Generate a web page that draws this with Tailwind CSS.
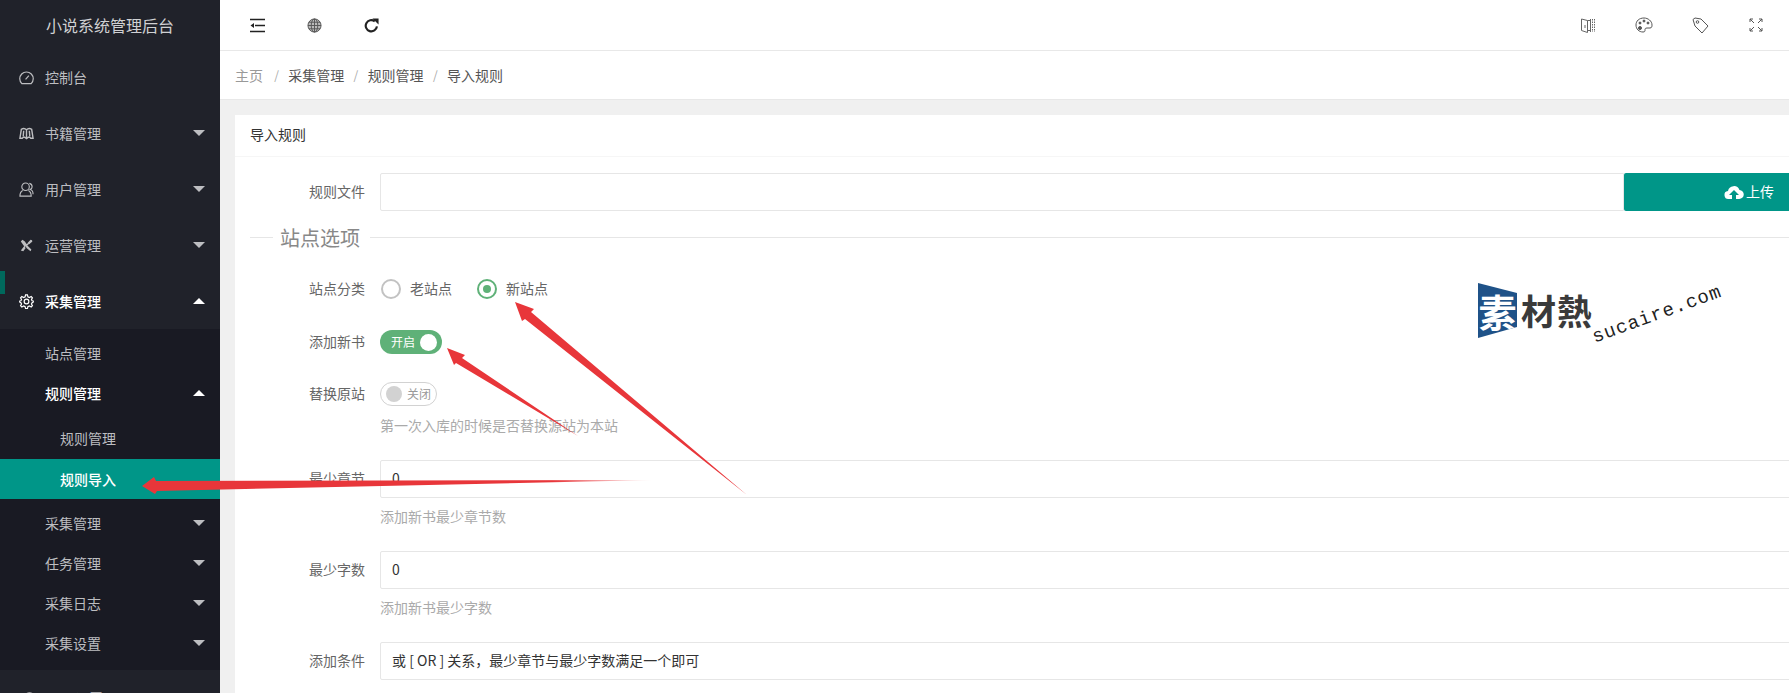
<!DOCTYPE html>
<html lang="zh-CN">
<head>
  <meta charset="UTF-8" />
  <title>小说系统管理后台</title>
  <script src="https://cdn.jsdelivr.net/npm/@tailwindcss/browser@4"></script>
</head>
<body class="relative h-[693px] overflow-hidden bg-white text-[14px] text-[#666] font-['Noto_Sans_CJK_SC','Liberation_Sans',sans-serif]">
<div class="flex h-[693px] overflow-hidden">

  <!-- sidebar -->
  <aside class="relative w-[220px] shrink-0 bg-[#20222a] text-[#bdbec1]">
    <div class="absolute left-0 top-[271px] h-[23px] w-[5px] bg-[#00695c]"></div>
    <div class="flex h-[49px] items-center pl-[46px] text-[16px] text-[#d0d1d3]">小说系统管理后台</div>
    <a class="flex h-[56px] items-center pl-[19px]">
      <svg class="mr-[11px] h-[15px] w-[15px]" viewBox="0 0 16 16" fill="none" stroke="currentColor" stroke-width="1.300"><path d="M3 14.500h10a7.200 7.200 0 1 0-10 0z"/><path d="M7 10l3.500-4"/></svg>
      控制台
    </a>
    <a class="flex h-[56px] items-center pl-[19px] pr-[15px]">
      <svg class="mr-[11px] h-[15px] w-[15px]" viewBox="0 0 16 16" fill="none" stroke="currentColor" stroke-width="1.500"><path d="M8 4C6.500 2.500 4 2.500 2.500 3.500L1 13h2.500l1-1H6l2 1.500L10 12h1.500l1 1H15L13.500 3.500C12 2.500 9.500 2.500 8 4zM8 4v9M5 5l-.5 6M11 5l.5 6"/></svg>
      <span class="flex-1">书籍管理</span>
      <span class="h-0 w-0 border-x-[6px] border-t-[6px] border-x-transparent border-t-[#bdbec1]"></span>
    </a>
    <a class="flex h-[56px] items-center pl-[19px] pr-[15px]">
      <svg class="mr-[11px] h-[15px] w-[15px]" viewBox="0 0 16 16" fill="none" stroke="currentColor" stroke-width="1.200"><circle cx="7" cy="5" r="4"/><path d="M4 9c-2 1-3 3-3 6h12c0-3-1-5-3-6M11 1.500c2 .5 3 2 3 3.500s-1 2.500-2 3c2 .5 3 3 3 5"/></svg>
      <span class="flex-1">用户管理</span>
      <span class="h-0 w-0 border-x-[6px] border-t-[6px] border-x-transparent border-t-[#bdbec1]"></span>
    </a>
    <a class="flex h-[56px] items-center pl-[20px] pr-[15px]">
      <svg class="mr-[12px] h-[13px] w-[13px]" viewBox="0 0 16 16" fill="currentColor"><path d="M1 3l2-2 3 2 2 3 2-1 1 1-2 2 1 1 4 4-1 2-5-4-1-2-1 1zM13 1c1.500 0 2.500 1 2 2.500L13 5l-1.500 1.500-2-2L11 3zM5 9l2 2-3 4-3-1z"/></svg>
      <span class="flex-1">运营管理</span>
      <span class="h-0 w-0 border-x-[6px] border-t-[6px] border-x-transparent border-t-[#bdbec1]"></span>
    </a>
    <a class="flex h-[56px] items-center pl-[19px] pr-[15px] font-medium text-white">
      <svg class="mr-[11px] h-[15px] w-[15px]" viewBox="0 0 16 16" fill="none" stroke="currentColor" stroke-width="1.300"><circle cx="8" cy="8" r="2.500"/><path d="M7 1h2l.5 2 1.500.7L13 2.700l1.300 1.300-1 1.800.7 1.500L16 8l-2 1.200-.7 1.500 1 1.800-1.300 1.300-2-1-1.500.7L9 15.500H7l-.5-2-1.500-.7-2 1L1.700 12.500l1-1.800L2 9.200 0 8l2-.7.700-1.500-1-1.800L3 2.700l2 1 1.500-.7z"/></svg>
      <span class="flex-1">采集管理</span>
      <span class="h-0 w-0 border-x-[6px] border-b-[6px] border-x-transparent border-b-white"></span>
    </a>
    <div class="bg-[#191a23] pb-[7px] pt-[4px]">
      <a class="flex h-[40px] items-center pl-[45px]">站点管理</a>
      <a class="flex h-[40px] items-center pl-[45px] pr-[15px] font-medium text-white">
        <span class="flex-1">规则管理</span>
        <span class="h-0 w-0 border-x-[6px] border-b-[6px] border-x-transparent border-b-white"></span>
      </a>
      <div class="pb-[4px] pt-[5px]">
        <a class="flex h-[41px] items-center pl-[60px]">规则管理</a>
        <a class="flex h-[40px] items-center bg-[#009688] pl-[60px] font-medium text-white">规则导入</a>
      </div>
      <a class="flex h-[40px] items-center pl-[45px] pr-[15px]">
        <span class="flex-1">采集管理</span>
        <span class="h-0 w-0 border-x-[6px] border-t-[6px] border-x-transparent border-t-[#bdbec1]"></span>
      </a>
      <a class="flex h-[40px] items-center pl-[45px] pr-[15px]">
        <span class="flex-1">任务管理</span>
        <span class="h-0 w-0 border-x-[6px] border-t-[6px] border-x-transparent border-t-[#bdbec1]"></span>
      </a>
      <a class="flex h-[40px] items-center pl-[45px] pr-[15px]">
        <span class="flex-1">采集日志</span>
        <span class="h-0 w-0 border-x-[6px] border-t-[6px] border-x-transparent border-t-[#bdbec1]"></span>
      </a>
      <a class="flex h-[40px] items-center pl-[45px] pr-[15px]">
        <span class="flex-1">采集设置</span>
        <span class="h-0 w-0 border-x-[6px] border-t-[6px] border-x-transparent border-t-[#bdbec1]"></span>
      </a>
    </div>
    <a class="flex h-[56px] items-center pl-[22px]">
      <svg class="mr-[38px] h-[15px] w-[15px]" viewBox="0 0 16 16" fill="none" stroke="currentColor" stroke-width="1.300"><circle cx="8" cy="8" r="6"/></svg>
      设置
    </a>
  </aside>

  <main class="flex min-w-0 flex-1 flex-col bg-[#f0f0f0]">
    <!-- top bar -->
    <header class="flex h-[51px] shrink-0 items-center border-b border-[#e8e8e8] bg-white pl-[30px] pr-[26px] text-[#333]">
      <svg class="h-[15px] w-[15px]" viewBox="0 0 15 15" fill="none" stroke="#222" stroke-width="1.600"><path d="M0 1.500h15M5 7.500h10M0 13.500h15"/><path d="M4 5L0.500 7.500 4 10z" fill="#222" stroke="none"/></svg>
      <svg class="ml-[42px] h-[15px] w-[15px]" viewBox="0 0 16 16" fill="#bbb" stroke="#555" stroke-width="1"><circle cx="8" cy="8" r="7"/><ellipse cx="8" cy="8" rx="3.500" ry="7" fill="none"/><path d="M8 1v14M1 8h14M2 4.500h12M2 11.500h12" fill="none"/></svg>
      <svg class="ml-[42px] h-[15px] w-[15px]" viewBox="0 0 16 16" fill="none" stroke="#222" stroke-width="2.300"><path d="M13.800 9A6 6 0 1 1 11.500 3.500"/><path d="M9 0.500h6.500v6.500z" fill="#222" stroke="none"/></svg>
      <svg class="ml-auto h-[15px] w-[14px]" viewBox="0 0 14 15" fill="none" stroke="#666" stroke-width="1"><path d="M0.500 1l6 1.500v12l-6-2zM6.500 2.500h3M6.500 12.500h3M4 7v3M9.500 1v13"/><path d="M11.500 1v13M13.500 1v13" stroke-dasharray="1.500 1"/></svg>
      <svg class="ml-[40px] h-[16px] w-[18px]" viewBox="0 0 18 16" fill="none" stroke="#555" stroke-width="1"><path d="M9 1C4 1 1 4 1 8s3 7 7 7c2 0 2-1 2-2s0-2 2-2h3c2 0 2-2 2-3 0-4-4-7-8-7z"/><circle cx="5" cy="6" r="1" fill="#555"/><circle cx="9" cy="4" r="1" fill="#555"/><circle cx="13" cy="6" r="1" fill="#555"/><circle cx="5" cy="11" r="1.500" fill="#555"/></svg>
      <svg class="ml-[39px] h-[17px] w-[17px]" viewBox="0 0 17 17" fill="none" stroke="#555" stroke-width="1"><path d="M1 2.500L3 1l6 1 7 7-6 7-7-7z"/><circle cx="5.500" cy="5" r="1.300"/></svg>
      <svg class="ml-[40px] h-[14px] w-[14px]" viewBox="0 0 14 14" fill="none" stroke="#555" stroke-width="1"><path d="M5 5L1 1M1 4V1h3M9 5l4-4M10 1h3v3M5 9l-4 4M1 10v3h3M9 9l4 4M13 10v3h-3"/></svg>
    </header>

    <!-- breadcrumb -->
    <nav class="flex h-[49px] shrink-0 items-center gap-[9.300px] border-b border-[#e8e8e8] bg-white pl-[15px] text-[#555]">
      <span class="mr-[2px] text-[#999]">主页</span><span class="text-[#aaa] text-[12px]">/</span>
      <span>采集管理</span><span class="text-[#aaa] text-[12px]">/</span>
      <span>规则管理</span><span class="text-[#aaa] text-[12px]">/</span>
      <span>导入规则</span>
    </nav>

    <!-- card -->
    <section class="ml-[15px] mt-[15px] flex-1 bg-white">
      <div class="flex h-[42px] items-center border-b border-[#f6f6f6] pb-[2px] pl-[15px] text-[#333]">导入规则</div>
      <div class="pl-[15px] pt-[16px]">
        <div class="flex h-[38px] items-center">
          <label class="mr-[15px] w-[115px] pb-[2px] text-right">规则文件</label>
          <div class="h-[38px] flex-1 rounded-l-[2px] border border-[#e6e6e6] bg-white"></div>
          <button class="flex h-[38px] w-[165px] items-center justify-end gap-[2px] rounded-l-[2px] bg-[#009688] pr-[15px] text-white">
            <svg class="h-[16px] w-[20px]" viewBox="0 0 20 16" fill="#fff"><path d="M5 15a4 4 0 0 1-1-8 6 6 0 0 1 11.500-1A4.500 4.500 0 0 1 15 15h-3v-4h3l-5-5-5 5h3v4z"/></svg>
            <span class="pb-[2px]">上传</span>
          </button>
        </div>

        <div class="mt-[12px] flex h-[28px] items-center">
          <span class="h-px w-[23px] bg-[#e6e6e6]"></span>
          <span class="ml-[7px] mr-[10px] pt-[1px] text-[20px] leading-[28px] text-[#888]">站点选项</span>
          <span class="h-px flex-1 bg-[#e6e6e6]"></span>
        </div>

        <div class="mt-[28px] flex h-[20px] items-center">
          <label class="mr-[16px] w-[115px] pb-[2px] text-right">站点分类</label>
          <span class="h-[20px] w-[20px] rounded-full border-2 border-[#c2c2c2]"></span>
          <span class="ml-[9px] pb-[2px]">老站点</span>
          <span class="ml-[25px] flex h-[20px] w-[20px] items-center justify-center rounded-full border-2 border-[#5fb178]">
            <span class="h-[8px] w-[8px] rounded-full bg-[#5fb178]"></span>
          </span>
          <span class="ml-[9px] pb-[2px]">新站点</span>
        </div>

        <div class="mt-[31px] flex h-[24px] items-center">
          <label class="mr-[15px] w-[115px] pb-[2px] text-right">添加新书</label>
          <span class="flex h-[24px] w-[62px] items-center rounded-full bg-[#5fb178] pl-[11px] text-[12px] text-white">
            开启<span class="ml-[5px] h-[17px] w-[17px] rounded-full bg-white"></span>
          </span>
        </div>

        <div class="mt-[28px] flex h-[24px] items-center">
          <label class="mr-[15px] w-[115px] pb-[2px] text-right">替换原站</label>
          <span class="flex h-[24px] w-[57px] items-center rounded-full border border-[#d2d2d2] pl-[5px] text-[12px] text-[#999]">
            <span class="mr-[5px] h-[16px] w-[16px] rounded-full bg-[#d2d2d2]"></span>关闭
          </span>
        </div>
        <p class="ml-[130px] mt-[9px] h-[20px] leading-[20px] text-[#aaa]">第一次入库的时候是否替换源站为本站</p>

        <div class="mt-[25px] flex h-[38px] items-center">
          <label class="mr-[15px] w-[115px] pb-[2px] text-right">最少章节</label>
          <div class="-mr-[20px] flex h-[38px] flex-1 items-center rounded-[2px] border border-[#e6e6e6] pb-[2px] pl-[11px] text-[#333]">0</div>
        </div>
        <p class="ml-[130px] mt-[8px] h-[20px] leading-[20px] text-[#aaa]">添加新书最少章节数</p>

        <div class="mt-[25px] flex h-[38px] items-center">
          <label class="mr-[15px] w-[115px] pb-[2px] text-right">最少字数</label>
          <div class="-mr-[20px] flex h-[38px] flex-1 items-center rounded-[2px] border border-[#e6e6e6] pb-[2px] pl-[11px] text-[#333]">0</div>
        </div>
        <p class="ml-[130px] mt-[8px] h-[20px] leading-[20px] text-[#aaa]">添加新书最少字数</p>

        <div class="mt-[25px] flex h-[38px] items-center">
          <label class="mr-[15px] w-[115px] pb-[2px] text-right">添加条件</label>
          <div class="-mr-[20px] flex h-[38px] flex-1 items-center rounded-[2px] border border-[#e6e6e6] pb-[2px] pl-[11px] text-[#333]">或 [ OR ] 关系，最少章节与最少字数满足一个即可</div>
        </div>
      </div>
    </section>
  </main>
</div>

<!-- watermark -->
<div class="absolute left-[1478px] top-[283px] h-[55px] w-[39px] bg-[#1f5288] [clip-path:polygon(0_0,100%_18%,100%_80%,0_100%)]">
  <span class="flex h-full items-center justify-center text-[38px] font-bold text-white">素</span>
</div>
<div class="absolute left-[1521px] top-[288px] text-[35px] font-bold leading-[44px] tracking-[1px] text-[#3a3a3a]">材熱</div>
<div class="absolute left-[1593px] top-[326px] origin-left -rotate-[20deg] font-['Liberation_Mono',monospace] text-[19px] leading-[24px] tracking-[1px] text-[#222]">sucaire.com</div>

<!-- red arrows drawn over the screenshot -->
<svg class="pointer-events-none absolute inset-0" width="1789" height="693" viewBox="0 0 1789 693">
  <defs>
    <linearGradient id="fade" x1="142" y1="0" x2="655" y2="0" gradientUnits="userSpaceOnUse">
      <stop offset="0" stop-color="#e8363a"/>
      <stop offset="0.8" stop-color="#e8363a"/>
      <stop offset="1" stop-color="#e8363a" stop-opacity="0"/>
    </linearGradient>
  </defs>
  <polygon points="515,302 534,309 531,312 747,495 525,319 522,321" fill="#e8363a"/>
  <polygon points="447,348 465,355 462,358 578,436 456,363 454,365" fill="#e8363a"/>
  <polygon points="142,486 154,477 156,481 655,480 157,491 155,494" fill="url(#fade)"/>
</svg>
</body>
</html>
